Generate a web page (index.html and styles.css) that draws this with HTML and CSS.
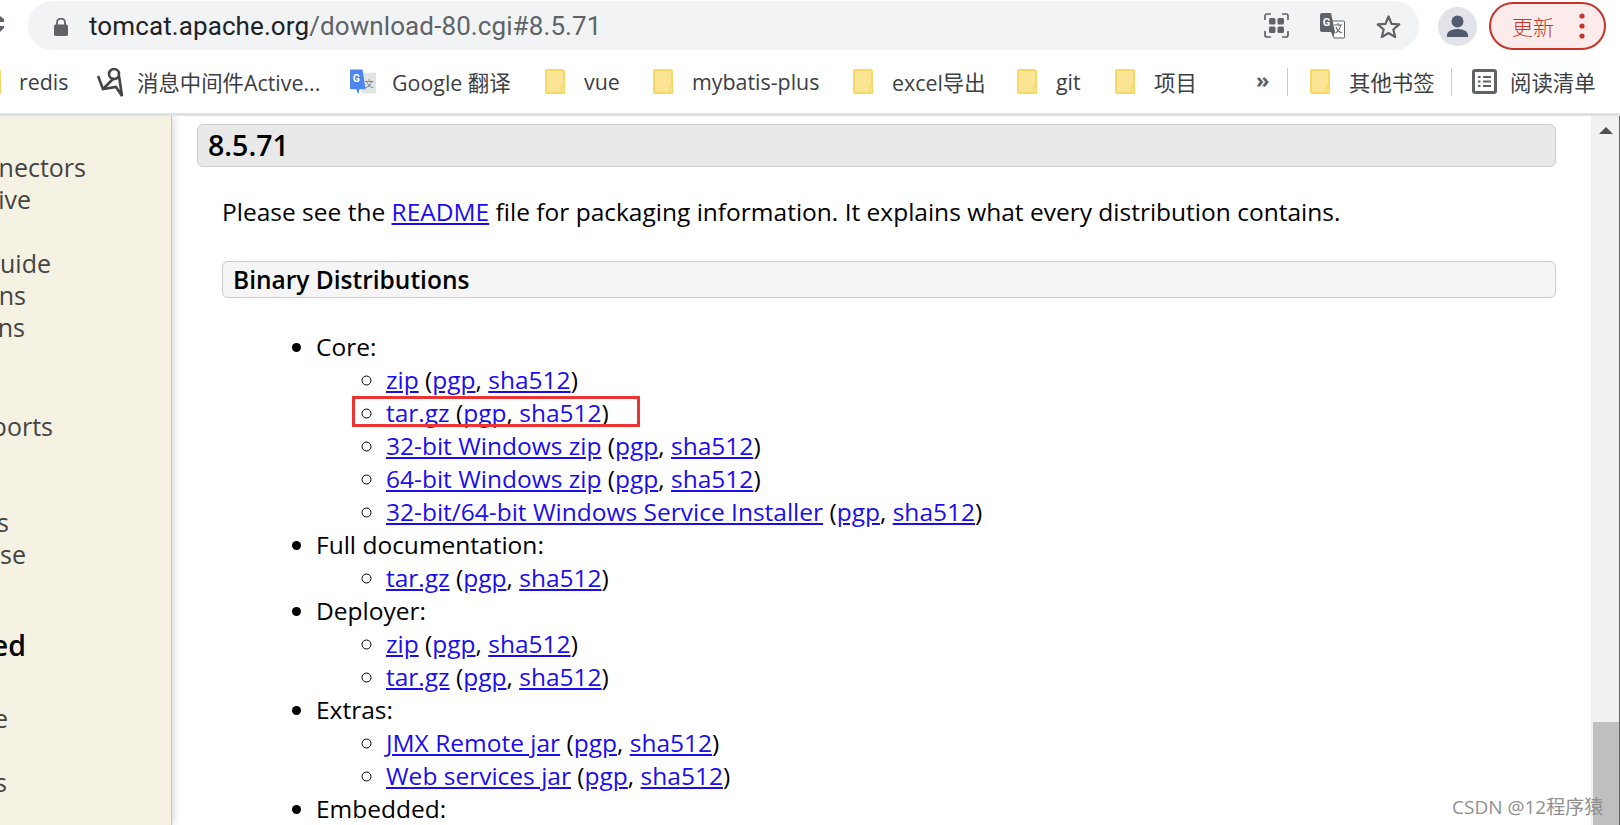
FILE: index.html
```html
<!DOCTYPE html>
<html lang="zh">
<head>
<meta charset="utf-8">
<title>Apache Tomcat Downloads</title>
<link rel="stylesheet" href="styles.css">
</head>
<body>
<svg class="defs" width="0" height="0" aria-hidden="true">
  <symbol id="folder" viewBox="0 0 21 25">
    <path d="M2 1h15a2 2 0 0 1 2 2v20a1 1 0 0 1-1 1H2a1 1 0 0 1-1-1V2a1 1 0 0 1 1-1z" fill="#fbe595" stroke="#f6d964" stroke-width="2"/>
    <path d="M16.500 24v-5.500a1.500 1.500 0 0 1 3 0V24z" fill="#fbe595" stroke="#f6d964" stroke-width="1.400"/>
  </symbol>
  <symbol id="gt" viewBox="0 0 26 26">
    <path d="M12 4h14v20H12z" fill="#e3e4e6"/>
    <path d="M1 1h12l3 19H10l-1 5-2-5H1z" fill="#4d86ee"/>
    <text x="7" y="13" class="gt-g">G</text>
    <text x="15" y="18" class="gt-w">文</text>
  </symbol>
</svg>
<div class="chrome">
  <div class="toolbar">
    <svg class="back" width="4" height="16" viewBox="0 0 4 16"><path d="M0 0l4 3v3H0zM0 10h4v2l-4 4z" fill="#5f6368"/></svg>
    <div class="omnibox">
      <svg class="lock" width="14" height="18" viewBox="0 0 14 18"><path d="M3 7V4.500a4 4 0 0 1 8 0V7" fill="none" stroke="#5f6368" stroke-width="1.800"/><rect x="0" y="6.500" width="14" height="11.500" rx="1.800" fill="#5f6368"/></svg>
      <div class="url"><span class="host">tomcat.apache.org</span>/download-80.cgi#8.5.71</div>
      <svg class="omni-icon" width="25" height="25" viewBox="0 0 25 25">
        <path d="M7 1H3a2 2 0 0 0-2 2v4M18 1h4a2 2 0 0 1 2 2v4M7 24H3a2 2 0 0 1-2-2v-4M18 24h4a2 2 0 0 0 2-2v-4" fill="none" stroke="#5f6368" stroke-width="1.700"/>
        <rect x="5" y="5" width="6.500" height="6.500" rx="1.500" fill="#5f6368"/><rect x="13.500" y="5" width="6.500" height="6.500" rx="1.500" fill="#5f6368"/><rect x="5" y="13.500" width="6.500" height="6.500" rx="1.500" fill="#5f6368"/><rect x="13.500" y="13.500" width="6.500" height="6.500" rx="1.500" fill="#5f6368"/>
      </svg>
      <svg class="omni-icon" width="25" height="26" viewBox="0 0 25 26">
        <path d="M11 8h12.500a1 1 0 0 1 1 1v15a1 1 0 0 1-1 1H14z" fill="#fff" stroke="#5f6368" stroke-width="1"/>
        <path d="M2 0h9l4 19H2a2 2 0 0 1-2-2V2a2 2 0 0 1 2-2z" fill="#5f6368"/>
        <path d="M11 19h4l-2 5z" fill="#5f6368"/>
        <text x="6.500" y="13" class="ti-g">G</text>
        <path d="M14 12h8M18 10v2M15.500 20c3-1.500 4.500-4 5-8M16 14c1 3 3 5 6 6" fill="none" stroke="#5f6368" stroke-width="1.100"/>
      </svg>
      <svg class="omni-icon star" width="25" height="24" viewBox="0 0 25 24"><path d="M12.500 2.500l3 7.300 7.800.6-6 5.100 1.900 7.600-6.700-4.100-6.700 4.100 1.900-7.600-6-5.100 7.800-.6z" fill="none" stroke="#5f6368" stroke-width="2.200" stroke-linejoin="round"/></svg>
    </div>
    <svg class="avatar" width="39" height="39" viewBox="0 0 39 39">
      <circle cx="19.500" cy="19.500" r="19.500" fill="#e1e3e8"/>
      <circle cx="19.500" cy="14.500" r="6" fill="#505a70"/>
      <path d="M9 30v-2c0-4 6-6 10.500-6S30 24 30 28v2z" fill="#505a70"/>
    </svg>
    <div class="update">
      <span class="update-label">更新</span>
      <svg width="6" height="26" viewBox="0 0 6 26"><circle cx="3" cy="3" r="2.600" fill="#c5352c"/><circle cx="3" cy="13" r="2.600" fill="#c5352c"/><circle cx="3" cy="23" r="2.600" fill="#c5352c"/></svg>
    </div>
  </div>
  <div class="bookmarks">
    <div class="bm bm-first"><svg class="fold fold-clip" width="21" height="25"><use href="#folder"/></svg><span>redis</span></div>
    <div class="bm bm-mq"><svg class="mq" width="27" height="30" viewBox="0 0 27 30"><path d="M1 9l5 13 13-2 6 9-3-20" fill="none" stroke="#444" stroke-width="2.600"/><circle cx="17" cy="7" r="5" fill="none" stroke="#444" stroke-width="2.600"/><path d="M6 22l11-11" stroke="#444" stroke-width="2.600"/></svg><span>消息中间件Active...</span></div>
    <div class="bm"><svg width="27" height="28"><use href="#gt"/></svg><span>Google 翻译</span></div>
    <div class="bm"><svg class="fold" width="21" height="25"><use href="#folder"/></svg><span>vue</span></div>
    <div class="bm"><svg class="fold" width="21" height="25"><use href="#folder"/></svg><span>mybatis-plus</span></div>
    <div class="bm"><svg class="fold" width="21" height="25"><use href="#folder"/></svg><span>excel导出</span></div>
    <div class="bm"><svg class="fold" width="21" height="25"><use href="#folder"/></svg><span>git</span></div>
    <div class="bm"><svg class="fold" width="21" height="25"><use href="#folder"/></svg><span>项目</span></div>
    <div class="more">»</div>
    <div class="sep"></div>
    <div class="bm"><svg class="fold" width="21" height="25"><use href="#folder"/></svg><span>其他书签</span></div>
    <div class="sep"></div>
    <div class="bm bm-read"><svg width="25" height="25" viewBox="0 0 25 25"><rect x="1.500" y="1.500" width="22" height="22" rx="1.500" fill="none" stroke="#5f6368" stroke-width="3"/><path d="M6 8h2.500M11 8h8M6 12.500h2.500M11 12.500h8M6 17h2.500M11 17h8" stroke="#5f6368" stroke-width="2.200"/></svg><span>阅读清单</span></div>
  </div>
</div>
<div class="page">
  <nav class="sidebar">
    <div class="side-inner">
      <div class="side-gap-top"></div>
      <div class="nav-item">Tomcat Connectors</div>
      <div class="nav-item nav-native">Tomcat Native</div>
      <div class="nav-blank"></div>
      <div class="nav-item nav-guide">Migration Guide</div>
      <div class="nav-item nav-ns">Versions</div>
      <div class="nav-item nav-ns2">Versions</div>
      <div class="nav-blank"></div>
      <div class="nav-blank"></div>
      <div class="nav-item nav-ports">Security Reports</div>
      <div class="nav-blank"></div>
      <div class="nav-blank"></div>
      <div class="nav-item nav-s">Mailing Lists</div>
      <div class="nav-item nav-se">Bug Database</div>
      <div class="nav-head">Get Involved</div>
      <div class="nav-item nav-e">Source Code</div>
      <div class="nav-blank"></div>
      <div class="nav-item nav-s2">Translations</div>
    </div>
  </nav>
  <main class="content">
    <h3 class="version">8.5.71</h3>
    <div class="section">
      <p class="intro">Please see the <a href="#">README</a> file for packaging information. It explains what every distribution contains.</p>
      <h4 class="dist">Binary Distributions</h4>
      <ul class="outer">
        <li>Core:
          <ul>
            <li><a href="#">zip</a> (<a href="#">pgp</a>, <a href="#">sha512</a>)</li>
            <li class="marked"><a href="#">tar.gz</a> (<a href="#">pgp</a>, <a href="#">sha512</a>)</li>
            <li><a href="#">32-bit Windows zip</a> (<a href="#">pgp</a>, <a href="#">sha512</a>)</li>
            <li><a href="#">64-bit Windows zip</a> (<a href="#">pgp</a>, <a href="#">sha512</a>)</li>
            <li><a href="#">32-bit/64-bit Windows Service Installer</a> (<a href="#">pgp</a>, <a href="#">sha512</a>)</li>
          </ul>
        </li>
        <li>Full documentation:
          <ul>
            <li><a href="#">tar.gz</a> (<a href="#">pgp</a>, <a href="#">sha512</a>)</li>
          </ul>
        </li>
        <li>Deployer:
          <ul>
            <li><a href="#">zip</a> (<a href="#">pgp</a>, <a href="#">sha512</a>)</li>
            <li><a href="#">tar.gz</a> (<a href="#">pgp</a>, <a href="#">sha512</a>)</li>
          </ul>
        </li>
        <li>Extras:
          <ul>
            <li><a href="#">JMX Remote jar</a> (<a href="#">pgp</a>, <a href="#">sha512</a>)</li>
            <li><a href="#">Web services jar</a> (<a href="#">pgp</a>, <a href="#">sha512</a>)</li>
          </ul>
        </li>
        <li>Embedded:</li>
      </ul>
    </div>
  </main>
  <div class="scrollbar">
    <div class="arrow"></div>
    <div class="thumb"></div>
  </div>
  <div class="watermark">CSDN @12程序猿</div>
</div>
</body>
</html>
```
FILE: styles.css
```css
* { box-sizing: border-box; }
html, body { margin: 0; height: 100%; overflow: hidden; }
body { width: 1620px; height: 825px; background: #fff; display: flex; flex-direction: column; font-family: "Open Sans", "Noto Sans CJK SC", sans-serif; color: #000; }
.defs { position: absolute; }
.gt-g { font: bold 10px "Roboto", sans-serif; fill: #fff; text-anchor: middle; }
.gt-w { font: 9px "Noto Sans CJK SC", sans-serif; fill: #777; }
.ti-g { font: bold 11px "Roboto", sans-serif; fill: #fff; text-anchor: middle; }

.chrome { flex: none; height: 116px; border-bottom: 3px solid #dee1e6; background: #fff; }
.toolbar { height: 58px; display: flex; align-items: flex-start; padding-top: 1px; position: relative; }
.back { position: absolute; left: 0; top: 16px; }
.omnibox { margin-left: 28px; width: 1391px; height: 49px; border-radius: 25px; background: #f1f3f4; display: flex; align-items: center; padding-left: 26px; }
.lock { flex: none; margin-top: 2px; }
.url { flex: 1; margin-left: 21px; font-size: 26px; color: #5f6368; font-family: "Roboto", "Noto Sans CJK SC", sans-serif; letter-spacing: .1px; }
.host { color: #202124; }
.omni-icon { flex: none; margin-right: 31px; }
.star { margin-right: 18px; }
.avatar { flex: none; margin: 6px 12px 0 19px; }
.update { flex: none; width: 117px; height: 48px; margin-top: 1px; border: 2px solid #c5352c; border-radius: 24px; background: #fbeceb; display: flex; align-items: center; padding-left: 21px; gap: 25px; color: #c5352c; font-size: 21px; }
.update-label { line-height: 1; font-family: "Noto Sans CJK SC", sans-serif; font-weight: 300; }

.bookmarks { height: 55px; padding-bottom: 8px; display: grid; grid-template-columns: 97px 252px 196px 108px 200px 164px 98px 141px 31px 23px 141px 21px 1fr; align-items: center; font-size: 21.400px; color: #3c4043; font-family: "Open Sans", "Noto Sans CJK SC", sans-serif; }
.bm { display: flex; align-items: center; gap: 16px; white-space: nowrap; min-width: 0; }
.bm-first { gap: 0; }
.bm-mq { gap: 13px; }
.bm-read { gap: 13px; }
.fold { flex: none; margin-right: 2px; }
.fold-clip { margin-left: -19px; margin-right: 17px; }
.mq { flex: none; }
.more { font-size: 22px; color: #5f6368; font-weight: 700; line-height: 1; margin-bottom: 5px; }
.sep { width: 1px; height: 28px; background: #c8cacd; }

.page { flex: 1; min-height: 0; display: flex; position: relative; overflow: hidden; }
.sidebar { flex: none; width: 172px; background: #f5f1e3; border-right: 1px solid #c9c6ba; overflow: hidden; position: relative; z-index: 1; box-shadow: 3px 0 6px rgba(0,0,0,.12); }
.side-inner { margin-left: -400px; width: 571px; text-align: right; font-size: 25px; line-height: 32px; color: #444; white-space: nowrap; }
.side-gap-top { height: 35px; }
.nav-item, .nav-blank { height: 32px; }
.nav-item { padding-right: 85px; }
.nav-native { padding-right: 140px; }
.nav-guide { padding-right: 120px; }
.nav-ns { padding-right: 145px; }
.nav-ns2 { padding-right: 146px; }
.nav-ports { margin-top: 3px; padding-right: 118px; }
.nav-s { padding-right: 162px; }
.nav-se { padding-right: 145px; }
.nav-head { margin-top: 53px; font-size: 28.500px; font-weight: 600; color: #000; height: 44px; line-height: 44px; padding-right: 145px; }
.nav-e { margin-top: 35px; padding-right: 163px; }
.nav-s2 { padding-right: 164px; }

.content { flex: 1; min-width: 0; padding: 8px 0 0 25px; font-size: 24.500px; line-height: 33px; }
.version { margin: 0; height: 43px; line-height: 41px; width: 1359px; padding-left: 10px; font-size: 28.500px; font-weight: 600; background: #e9e9e9; border: 1px solid #ccc; border-radius: 6px; }
.section { padding-left: 25px; }
.intro { margin: 28px 0 0; }
.dist { margin: 33px 0 0; width: 1334px; height: 37px; line-height: 35px; padding-left: 10px; font-size: 24.500px; font-weight: 600; background: #f5f5f5; border: 1px solid #ccc; border-radius: 6px; }
ul { margin: 0; padding: 0; }
.outer { margin-top: 32px; padding-left: 94px; }
.outer ul { padding-left: 70px; list-style: circle; }
a { color: #1a0dee; text-decoration: underline; }
.marked { position: relative; }
.marked::after { content: ""; box-sizing: border-box; position: absolute; left: -34px; top: 0; width: 288px; height: 31px; border: 3px solid #ee3333; pointer-events: none; }

.scrollbar { flex: none; width: 29px; border-right: 1px solid #5f6368; position: relative; background: #f1f1f1; }
.arrow { margin: 11px 0 0 8px; width: 0; height: 0; border-left: 7px solid transparent; border-right: 7px solid transparent; border-bottom: 7px solid #505050; }
.thumb { position: absolute; top: 606px; left: 2px; right: 0; bottom: 0; background: #bfbfbf; }
.watermark { position: absolute; left: 1452px; bottom: 6px; font-size: 19px; line-height: 24px; color: #8f8f8f; white-space: nowrap; z-index: 2; }
```
